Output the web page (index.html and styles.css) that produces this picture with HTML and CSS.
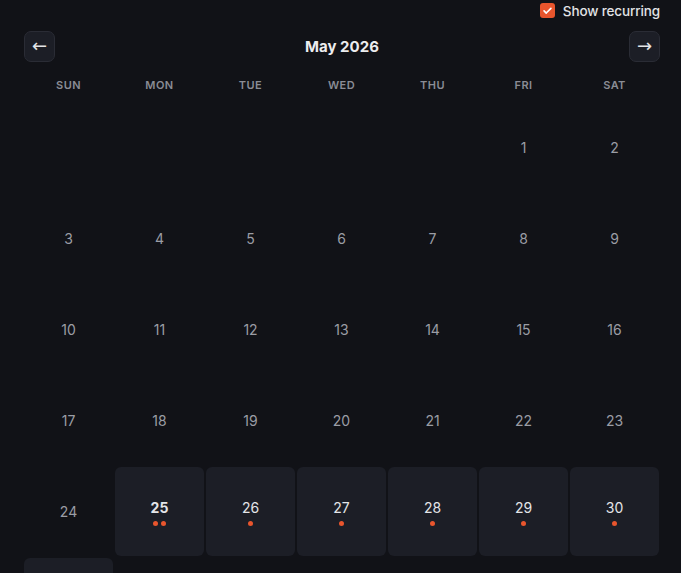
FILE: index.html
```html
<!DOCTYPE html>
<html lang="en">
<head>
<meta charset="UTF-8">
<title>Calendar</title>
<link rel="stylesheet" href="styles.css">
</head>
<body>
  <div class="calendar">
    <!-- recurring toggle -->
    <div class="toolbar">
      <label class="toggle">
        <span class="check">
          <svg viewBox="0 0 16 16" width="11" height="11"><path d="M3 8.5l3.2 3.2L13 4.8" fill="none" stroke="#fff" stroke-width="2.4" stroke-linecap="round" stroke-linejoin="round"/></svg>
        </span>
        Show recurring
      </label>
    </div>

    <!-- month nav -->
    <div class="month-nav">
      <button class="nav-btn">&larr;</button>
      <h2>May 2026</h2>
      <button class="nav-btn">&rarr;</button>
    </div>

    <div class="weekdays">
      <span>Sun</span><span>Mon</span><span>Tue</span><span>Wed</span><span>Thu</span><span>Fri</span><span>Sat</span>
    </div>

    <div class="days" id="days"></div>
  </div>

<script>
  // May 2026 starts on a Friday
  const events = {25: 2, 26: 1, 27: 1, 28: 1, 29: 1, 30: 1, 31: 1};
  const days = document.getElementById('days');

  for (let i = 0; i < 5; i++) {
    days.appendChild(document.createElement('div'));
  }
  for (let d = 1; d <= 31; d++) {
    const cell = document.createElement('div');
    cell.className = 'day';
    if (events[d]) cell.classList.add('has-events');
    if (d === 25) cell.classList.add('today');
    let dots = '';
    for (let k = 0; k < (events[d] || 0); k++) dots += '<i></i>';
    cell.innerHTML = `<span class="num">${d}</span>` + (dots ? `<span class="dots">${dots}</span>` : '');
    days.appendChild(cell);
  }
</script>
</body>
</html>
```

FILE: styles.css
```css
/* page */
body{
  margin:0;
  background:#111217;
  color:#e6e7ea;
  font-family: Inter, "Noto Sans", sans-serif;
  overflow:hidden;
}
.calendar{
  width:636px;
  margin-left:24px;
}

/* toolbar */
.toolbar{
  display:flex;
  justify-content:flex-end;
  height:21px;
}
.toggle{
  display:flex;
  align-items:center;
  gap:8px;
  font-size:13.5px;
  font-weight:500;
  letter-spacing:-.01em;
  color:#e2e3e6;
}
.check{
  width:15px;
  height:15px;
  border-radius:3px;
  background:#e8552d;
  display:flex;
  align-items:center;
  justify-content:center;
}

/* month navigation */
.month-nav{
  display:flex;
  align-items:center;
  justify-content:space-between;
  margin-top:10px;
}
.month-nav h2{
  margin:0;
  font-size:15px;
  font-weight:700;
  color:#ececee;
}
.nav-btn{
  width:31px;
  height:31px;
  border-radius:7px;
  border:1px solid #2a2c35;
  background:#1c1e26;
  color:#e4e5e8;
  font-size:18px;
  line-height:1;
  padding:0 0 2px;
  font-family:"DejaVu Sans", sans-serif;
}

/* weekday header */
.weekdays{
  display:grid;
  grid-template-columns:repeat(7, 89px);
  column-gap:2px;
  margin-top:16px;
  height:25px;
  font-size:11px;
  font-weight:600;
  letter-spacing:.04em;
  text-transform:uppercase;
  color:#8a8c95;
  text-align:center;
}

/* day grid */
.days{
  display:grid;
  grid-template-columns:repeat(7, 89px);
  grid-auto-rows:89px;
  gap:2px;
}
.day{
  display:flex;
  flex-direction:column;
  align-items:center;
  justify-content:center;
  border-radius:6px;
  font-size:14px;
  color:#9b9da5;
}
.day.has-events{
  background:#1c1e26;
  color:#e4e5e8;
  padding-top:1px;
}
.day.today .num{ font-weight:700 }
.dots{
  display:flex;
  gap:3px;
  margin-top:5px;
}
.dots i{
  width:5px;
  height:5px;
  border-radius:50%;
  background:#e8552d;
}
```
